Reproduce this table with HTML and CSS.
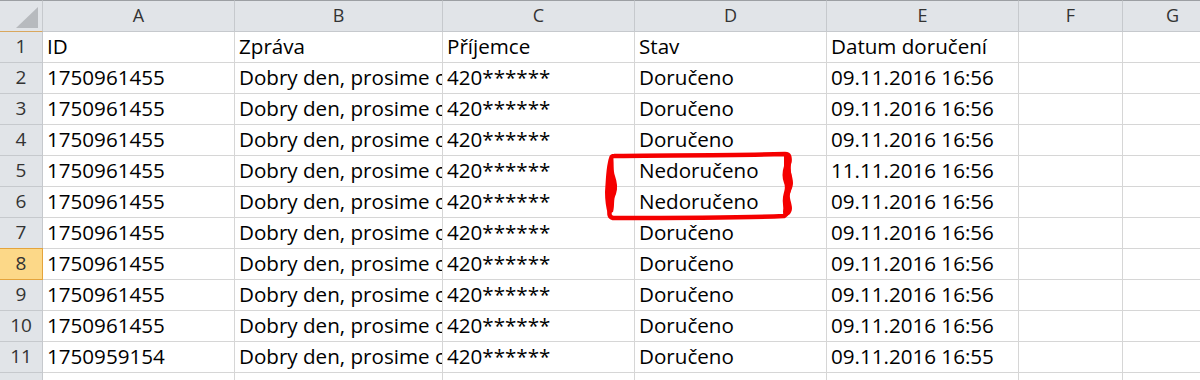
FILE: index.html
```html
<!DOCTYPE html>
<html lang="cs">
<head>
<meta charset="utf-8">
<title>Sheet</title>
<link rel="stylesheet" href="styles.css">
</head>
<body>
<div class="wrap">
  <div class="sheet">
    <div class="corner"><span class="tri"></span></div>
    <div class="colh">A</div><div class="colh">B</div><div class="colh">C</div><div class="colh">D</div><div class="colh">E</div><div class="colh">F</div><div class="colh">G</div>

    <div class="rowh">1</div><div class="cell">ID</div><div class="cell">Zpráva</div><div class="cell">Příjemce</div><div class="cell">Stav</div><div class="cell">Datum doručení</div><div class="cell"></div><div class="cell"></div>

    <div class="rowh">2</div><div class="cell">1750961455</div><div class="cell">Dobry den, prosime o zaplacení</div><div class="cell">420******</div><div class="cell">Doručeno</div><div class="cell">09.11.2016 16:56</div><div class="cell"></div><div class="cell"></div>

    <div class="rowh">3</div><div class="cell">1750961455</div><div class="cell">Dobry den, prosime o zaplacení</div><div class="cell">420******</div><div class="cell">Doručeno</div><div class="cell">09.11.2016 16:56</div><div class="cell"></div><div class="cell"></div>

    <div class="rowh">4</div><div class="cell">1750961455</div><div class="cell">Dobry den, prosime o zaplacení</div><div class="cell">420******</div><div class="cell">Doručeno</div><div class="cell">09.11.2016 16:56</div><div class="cell"></div><div class="cell"></div>

    <div class="rowh">5</div><div class="cell">1750961455</div><div class="cell">Dobry den, prosime o zaplacení</div><div class="cell">420******</div><div class="cell">Nedoručeno</div><div class="cell">11.11.2016 16:56</div><div class="cell"></div><div class="cell"></div>

    <div class="rowh">6</div><div class="cell">1750961455</div><div class="cell">Dobry den, prosime o zaplacení</div><div class="cell">420******</div><div class="cell">Nedoručeno</div><div class="cell">09.11.2016 16:56</div><div class="cell"></div><div class="cell"></div>

    <div class="rowh">7</div><div class="cell">1750961455</div><div class="cell">Dobry den, prosime o zaplacení</div><div class="cell">420******</div><div class="cell">Doručeno</div><div class="cell">09.11.2016 16:56</div><div class="cell"></div><div class="cell"></div>

    <div class="rowh sel">8</div><div class="cell">1750961455</div><div class="cell">Dobry den, prosime o zaplacení</div><div class="cell">420******</div><div class="cell">Doručeno</div><div class="cell">09.11.2016 16:56</div><div class="cell"></div><div class="cell"></div>

    <div class="rowh">9</div><div class="cell">1750961455</div><div class="cell">Dobry den, prosime o zaplacení</div><div class="cell">420******</div><div class="cell">Doručeno</div><div class="cell">09.11.2016 16:56</div><div class="cell"></div><div class="cell"></div>

    <div class="rowh">10</div><div class="cell">1750961455</div><div class="cell">Dobry den, prosime o zaplacení</div><div class="cell">420******</div><div class="cell">Doručeno</div><div class="cell">09.11.2016 16:56</div><div class="cell"></div><div class="cell"></div>

    <div class="rowh">11</div><div class="cell">1750959154</div><div class="cell">Dobry den, prosime o zaplacení</div><div class="cell">420******</div><div class="cell">Doručeno</div><div class="cell">09.11.2016 16:55</div><div class="cell"></div><div class="cell"></div>

    <div class="rowh">12</div><div class="cell">1750959154</div><div class="cell">Dobry den, prosime o zaplacení</div><div class="cell">420******</div><div class="cell">Doručeno</div><div class="cell">09.11.2016 16:55</div><div class="cell"></div><div class="cell"></div>
  </div>

  <svg class="mark" width="1200" height="380" viewBox="0 0 1200 380" aria-hidden="true">
    <path class="ring" d="M614 156 C650 155 720 156 785 154 C790 154 790 158 789 163 C787 170 790 176 790 183 C790 190 786 194 787 200 C788 207 789 213 784 216 C740 218 660 218 613 218 C609 217 609 214 610 209 C611 200 609 192 610 184 C611 175 611 168 611 162 C611 158 611 156 614 156 Z"/>
    <path class="blob" d="M609 158 C606 168 606 180 605 192 C605 200 606 208 608 214 L613 212 C615 205 613 200 616 194 C618 188 617 182 615 176 C613 170 614 163 613 158 Z"/>
    <path class="blob" d="M784 156 C790 154 793 158 791 164 C789 170 793 176 793 183 C793 189 789 192 790 198 C791 204 794 209 790 214 C787 217 783 216 783 212 C784 207 782 202 783 197 C784 191 786 188 784 183 C782 178 782 172 784 166 Z"/>
  </svg>
</div>
</body>
</html>
```
FILE: styles.css
```css
html, body {
  margin: 0;
  padding: 0;
  background: #ffffff;
}

.wrap {
  position: relative;
  width: 1200px;
  height: 380px;
  overflow: hidden;
}

.sheet {
  display: grid;
  grid-template-columns: 43px 192px 208px 192px 192px 192px 104px 100px;
  grid-template-rows: 32px;
  grid-auto-rows: 31px;
  font-family: "Open Sans", "Noto Sans", sans-serif;
}

.sheet > div {
  box-sizing: border-box;
}

.corner {
  position: relative;
  background: #e1e4e8;
  border-top: 1px solid #9c9fa3;
  border-right: 1px solid #c6c9cd;
  border-bottom: 1px solid #d9a75e;
}

.tri {
  position: absolute;
  left: 16px;
  top: 6px;
  width: 0;
  height: 0;
  border-left: 22px solid transparent;
  border-bottom: 21px solid #b7babe;
}

.colh {
  background: #e1e4e8;
  border-top: 1px solid #9c9fa3;
  border-right: 1px solid #c6c9cd;
  border-bottom: 1px solid #c6c9cd;
  color: #333333;
  font-size: 18px;
  line-height: 28px;
  text-align: center;
}

.rowh {
  background: #e1e4e8;
  border-right: 1px solid #c6c9cd;
  border-bottom: 1px solid #c6c9cd;
  color: #333333;
  font-size: 19px;
  line-height: 29px;
  text-align: center;
}

.rowh.sel {
  background: #fcd888;
  border-right-color: #e4a43c;
  border-bottom-color: #e4a43c;
  box-shadow: 0 -1px 0 #e4a43c;
}

.cell {
  border-right: 1px solid #d6d6d6;
  border-bottom: 1px solid #d6d6d6;
  color: #000000;
  font-size: 20.6px;
  line-height: 28px;
  padding-left: 4px;
  white-space: nowrap;
  overflow: hidden;
}

.mark {
  position: absolute;
  left: 0;
  top: 0;
  pointer-events: none;
}

.ring {
  fill: none;
  stroke: #f50000;
  stroke-width: 4.5;
  stroke-linejoin: round;
}

.blob {
  fill: #f50000;
}
```
